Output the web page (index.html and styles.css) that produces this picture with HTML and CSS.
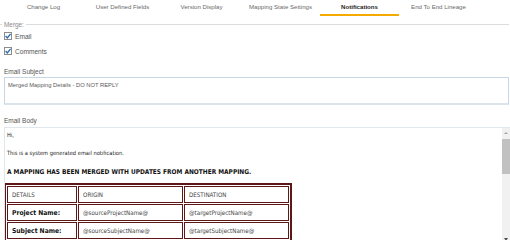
FILE: index.html
```html
<!DOCTYPE html>
<html>
<head>
<meta charset="utf-8">
<link rel="stylesheet" href="styles.css">
</head>
<body>
<nav class="tabs">
  <div class="tab">Change Log</div>
  <div class="tab">User Defined Fields</div>
  <div class="tab">Version Display</div>
  <div class="tab">Mapping State Settings</div>
  <div class="tab active">Notifications</div>
  <div class="tab">End To End Lineage</div>
</nav>
<main class="form">
  <section class="group">
    <div class="group-title">Merge:</div>
    <div class="check-row">
      <svg class="check" viewBox="0 0 8 8" width="8" height="8"><rect x="0.5" y="0.5" width="7" height="7" fill="#fff" stroke="#8c8c8c"/><path d="M1.6 4.1 L3.3 5.9 L6.6 1.9" fill="none" stroke="#2b6cb3" stroke-width="1.4"/></svg>
      <span>Email</span>
    </div>
    <div class="check-row">
      <svg class="check" viewBox="0 0 8 8" width="8" height="8"><rect x="0.5" y="0.5" width="7" height="7" fill="#fff" stroke="#8c8c8c"/><path d="M1.6 4.1 L3.3 5.9 L6.6 1.9" fill="none" stroke="#2b6cb3" stroke-width="1.4"/></svg>
      <span>Comments</span>
    </div>
  </section>
  <label class="field-label subject-label">Email Subject</label>
  <div class="subject-box">Merged Mapping Details - DO NOT REPLY</div>
  <label class="field-label body-label">Email Body</label>
  <div class="body-box">
    <div class="body-content">
      <p class="p-hi">Hi,</p>
      <p class="p-intro">This is a system generated email notification.</p>
      <p class="p-head">A MAPPING HAS BEEN MERGED WITH UPDATES FROM ANOTHER MAPPING.</p>
      <table class="details">
        <tr><td class="c1">DETAILS</td><td class="c2">ORIGIN</td><td class="c3">DESTINATION</td></tr>
        <tr><td class="c1 b">Project Name:</td><td class="c2">@sourceProjectName@</td><td class="c3">@targetProjectName@</td></tr>
        <tr><td class="c1 b">Subject Name:</td><td class="c2">@sourceSubjectName@</td><td class="c3">@targetSubjectName@</td></tr>
        <tr><td class="c1"></td><td class="c2"></td><td class="c3"></td></tr>
      </table>
    </div>
    <div class="scrollbar">
      <div class="arrow up"></div>
      <div class="track"><div class="thumb"></div></div>
      <div class="arrow down"></div>
    </div>
  </div>
</main>
</body>
</html>
```

FILE: styles.css
```css
* { box-sizing: border-box; }
html, body { margin: 0; padding: 0; background: #fff; }
body {
  width: 510px;
  height: 240px;
  overflow: hidden;
  font-family: "Liberation Sans", Arial, sans-serif;
  color: #555;
}

.tabs {
  display: flex;
  padding-left: 4px;
  height: 20px;
}
.tab {
  width: 79px;
  height: 16px;
  line-height: 14px;
  font-size: 6.1px;
  text-align: center;
  color: #6a6a6a;
  border-bottom: 2px solid transparent;
  white-space: nowrap;
}
.tab.active {
  color: #1e1e1e;
  font-weight: bold;
  border-bottom-color: #f5aa00;
}

.form {
  display: flex;
  flex-direction: column;
  padding: 0 1px 0 4px;
}

.group {
  display: flex;
  flex-direction: column;
  gap: 7px;
  margin-left: -4px;
}
.group-title {
  display: flex;
  align-items: center;
  gap: 2px;
  height: 8px;
  font-size: 6.4px;
  color: #8a8a8a;
  margin-bottom: -3px;
}
.group-title::before {
  content: "";
  width: 2px;
  height: 1px;
  background: #dcdcdc;
}
.group-title::after {
  content: "";
  flex: 1;
  height: 1px;
  background: #dcdcdc;
}
.check-row {
  display: flex;
  align-items: center;
  gap: 3px;
  height: 8px;
  padding-left: 4px;
  font-size: 6.6px;
  color: #555;
}
.check { display: block; flex: none; }

.field-label {
  display: block;
  height: 8px;
  line-height: 8px;
  font-size: 6.5px;
  color: #555;
}
.subject-label { margin-top: 13px; margin-bottom: 1px; }
.body-label { margin-top: 12px; margin-bottom: 2px; }

.subject-box {
  height: 28px;
  border: 1px solid #c8d6e5;
  border-bottom: 2px solid #dbe3eb;
  padding: 3px 3px 0;
  line-height: 8px;
  font-size: 5.8px;
  color: #5a5a5a;
}

.body-box {
  display: flex;
  height: 120px;
  margin-right: -1px;
  border-top: 1px solid #e0e8ef;
  border-left: 1px solid #e0e8ef;
}
.body-content {
  flex: 1;
  overflow: hidden;
  padding-top: 3px;
  font-family: "DejaVu Sans Condensed", "DejaVu Sans", sans-serif;
  color: #222;
}
.body-content p {
  margin: 0;
  padding-left: 2px;
  line-height: 8px;
  font-size: 5.7px;
  white-space: nowrap;
}
.p-hi { margin-bottom: 10px !important; }
.p-intro { margin-bottom: 11px !important; }
.p-head {
  font-weight: bold;
  font-size: 6.5px !important;
  color: #111;
  margin-bottom: 7px !important;
}

.details {
  width: 288px;
  margin-left: -1px;
  border: 2px solid #5e1717;
  border-spacing: 1px;
  background: #fff;
  table-layout: fixed;
}
.details td {
  height: 17px;
  border: 1px solid #5e1717;
  padding: 0 0 0 4px;
  font-size: 6.2px;
  color: #444;
  white-space: nowrap;
  overflow: hidden;
}
.details td.c1 { width: 70px; }
.details td.c2 { width: 105px; }
.details td.c3 { width: 105px; }
.details td.b {
  font-weight: bold;
  font-size: 6.7px;
  color: #111;
}

.scrollbar {
  width: 8px;
  flex: none;
  display: flex;
  flex-direction: column;
  background: #f1f1f1;
}
.arrow {
  height: 10px;
  display: flex;
  align-items: center;
  justify-content: center;
}
.arrow.up::before {
  content: "";
  border-left: 2px solid transparent;
  border-right: 2px solid transparent;
  border-bottom: 2px solid #a3a3a3;
}
.arrow.down::before {
  content: "";
  border-left: 2px solid transparent;
  border-right: 2px solid transparent;
  border-top: 3px solid #505050;
}
.track { flex: 1; }
.thumb {
  height: 35px;
  margin-top: 1px;
  background: #c1c1c1;
}
.arrow.down { margin-bottom: 3px; }
```
